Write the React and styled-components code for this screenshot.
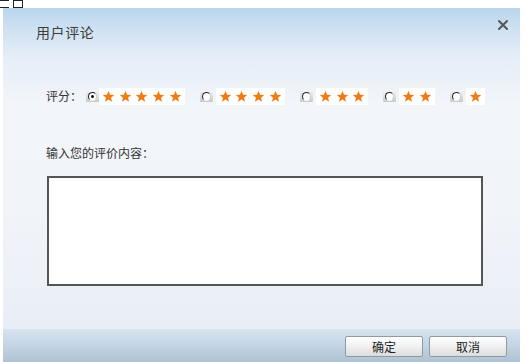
import React from 'react';
import styled, { createGlobalStyle } from 'styled-components';

const GlobalStyle = createGlobalStyle`
  html, body {
    margin: 0;
    padding: 0;
    background: #ffffff;
  }
  body {
    font-family: "Noto Sans CJK SC", "Liberation Sans", sans-serif;
    color: #333;
  }
`;

const Strip = styled.div`
  height: 8px;
  display: flex;
  gap: 4px;
`;

const Mark = styled.span`
  width: ${p => p.w}px;
  height: 6px;
  border-top: 1px solid #222;
  border-bottom: 1px solid #222;
  border-left: ${p => (p.box ? '1px solid #222' : 'none')};
  border-right: ${p => (p.box ? '1px solid #222' : 'none')};
`;

const Dialog = styled.div`
  margin-left: 3px;
  width: 517px;
  height: 354px;
  display: flex;
  flex-direction: column;
  background: linear-gradient(
    to bottom,
    #bad5ec 0px,
    #cfe2f2 22px,
    #e6eef7 50px,
    #f2f5f9 95px,
    #f1f4f9 200px,
    #e9eef6 320px
  );
`;

const Header = styled.div`
  height: 50px;
  display: flex;
  align-items: center;
  padding-bottom: 4px;
  box-sizing: border-box;
`;

const Title = styled.div`
  flex: 1;
  padding-left: 33px;
  font-size: 14px;
  letter-spacing: 0.6px;
  color: #3c3c3c;
  margin-top: 1px;
`;

const Close = styled.button`
  border: none;
  background: none;
  padding: 0;
  width: 14px;
  height: 14px;
  margin: -12px 10px 0 0;
  cursor: pointer;
  display: flex;
  align-items: center;
  justify-content: center;
`;

const Body = styled.div`
  flex: 1;
  padding: 28px 0 0 43px;
  display: flex;
  flex-direction: column;
`;

const RatingRow = styled.div`
  height: 20px;
  display: flex;
  align-items: center;
  gap: 15px;
`;

const Label = styled.span`
  font-size: 12px;
  line-height: 16px;
  color: #333;
`;

const FieldLabel = styled(Label)`
  margin-top: 39px;
`;

const RatingLabel = styled(Label)`
  margin-right: -11px;
`;

const Option = styled.label`
  display: flex;
  align-items: center;
  gap: ${p => (p.first ? 0 : 3)}px;
  cursor: pointer;
`;

const RadioBox = styled.span`
  width: 13px;
  height: 11px;
  display: flex;
  align-items: center;
  justify-content: center;
  background: linear-gradient(to bottom, #f2f2f2, #c9c9c9);
  border-radius: 1px;
`;

const Circle = styled.span`
  width: 7px;
  height: 7px;
  border-radius: 50%;
  border: 1px solid;
  border-color: #222 #c8c8c8 #f4f4f4 #222;
  background: #fff;
  display: flex;
  align-items: center;
  justify-content: center;

  &::after {
    content: '';
    width: 3px;
    height: 3px;
    border-radius: 50%;
    background: ${p => (p.checked ? '#111' : 'transparent')};
  }
`;

const StarBox = styled.span`
  display: flex;
  align-items: center;
  gap: 3.7px;
  background: #ffffff;
  padding: 2px 3px;
`;

const Textarea = styled.textarea`
  margin: 15px 0 0 1px;
  width: 436px;
  height: 110px;
  box-sizing: border-box;
  border: 2px solid #555;
  background: #fff;
  resize: none;
  outline: none;
  font-family: inherit;
`;

const Footer = styled.div`
  height: 33px;
  display: flex;
  align-items: center;
  justify-content: flex-end;
  gap: 6px;
  padding: 0 13px 0 0;
  box-sizing: border-box;
  background: linear-gradient(to bottom, #d7e4f0, #c3d4e3 50%, #aec3d4);
`;

const Button = styled.button`
  width: 78px;
  height: 21px;
  margin-top: 1px;
  font-family: inherit;
  font-size: 12px;
  color: #222;
  border: 1px solid #8f9aa3;
  border-radius: 2px;
  background: linear-gradient(to bottom, #fefefe, #f1f1f1 50%, #dcdcdc);
  padding: 0;
  cursor: pointer;
`;

const Star = () => (
  <svg width="13" height="13" viewBox="0 0 24 24">
    <polygon
      points="12,1.5 14.9,8.6 22.5,9.2 16.7,14.1 18.5,21.6 12,17.6 5.5,21.6 7.3,14.1 1.5,9.2 9.1,8.6"
      fill="#f17c14"
    />
  </svg>
);

const ratings = [5, 4, 3, 2, 1];

export default function App() {
  return (
    <>
      <GlobalStyle />
      <Strip>
        <Mark w={9} />
        <Mark w={8} box />
      </Strip>
      <Dialog>
        <Header>
          <Title>用户评论</Title>
          <Close aria-label="关闭">
            <svg width="12" height="12" viewBox="0 0 12 12">
              <path d="M2 2 L10 10 M10 2 L2 10" stroke="#555" strokeWidth="2" strokeLinecap="round" />
            </svg>
          </Close>
        </Header>
        <Body>
          <RatingRow>
            <RatingLabel>评分：</RatingLabel>
            {ratings.map((n, i) => (
              <Option key={n} first={i === 0}>
                <RadioBox>
                  <Circle checked={i === 0} />
                </RadioBox>
                <StarBox>
                  {Array.from({ length: n }).map((_, k) => (
                    <Star key={k} />
                  ))}
                </StarBox>
              </Option>
            ))}
          </RatingRow>
          <FieldLabel>输入您的评价内容：</FieldLabel>
          <Textarea />
        </Body>
        <Footer>
          <Button>确定</Button>
          <Button>取消</Button>
        </Footer>
      </Dialog>
    </>
  );
}
